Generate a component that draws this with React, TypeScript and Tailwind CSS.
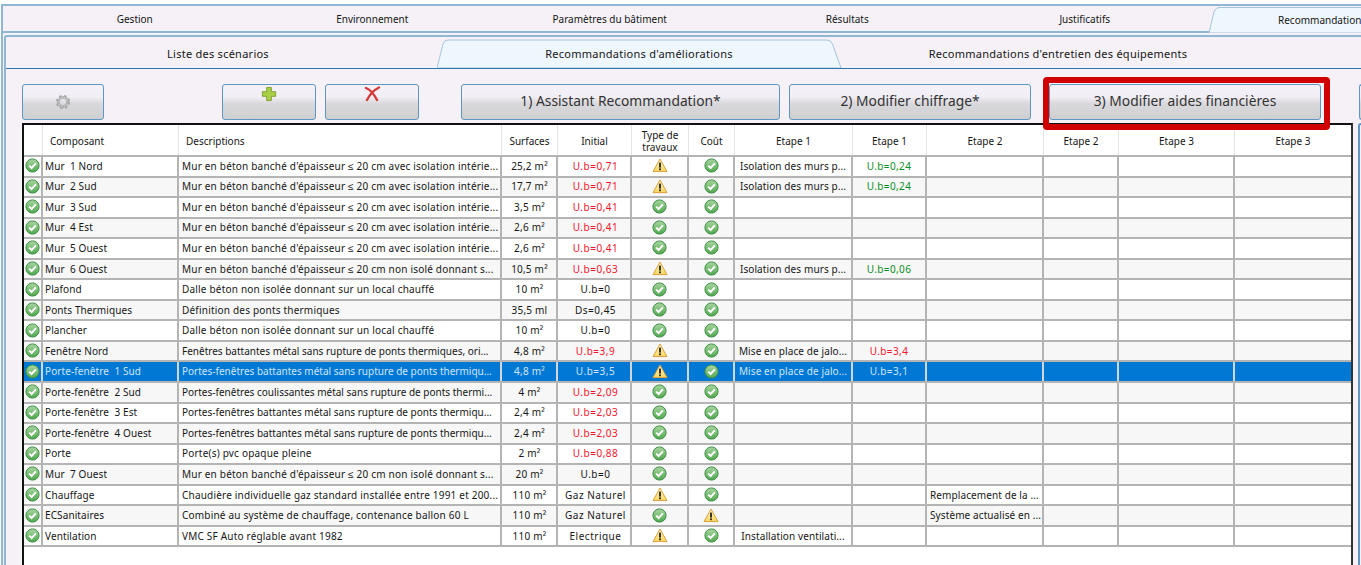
import type { ReactNode } from "react";

const rows: [string, string, string, [string, string], string, string, string, [string, string], string][] = [
  ["Mur  1 Nord", "Mur en béton banché d'épaisseur ≤ 20 cm avec isolation intérie...", "25,2 m²", ["U.b=0,71", "r"], "w", "o", "Isolation des murs p...", ["U.b=0,24", "g"], ""],
  ["Mur  2 Sud", "Mur en béton banché d'épaisseur ≤ 20 cm avec isolation intérie...", "17,7 m²", ["U.b=0,71", "r"], "w", "o", "Isolation des murs p...", ["U.b=0,24", "g"], ""],
  ["Mur  3 Sud", "Mur en béton banché d'épaisseur ≤ 20 cm avec isolation intérie...", "3,5 m²", ["U.b=0,41", "r"], "o", "o", "", ["", ""], ""],
  ["Mur  4 Est", "Mur en béton banché d'épaisseur ≤ 20 cm avec isolation intérie...", "2,6 m²", ["U.b=0,41", "r"], "o", "o", "", ["", ""], ""],
  ["Mur  5 Ouest", "Mur en béton banché d'épaisseur ≤ 20 cm avec isolation intérie...", "2,6 m²", ["U.b=0,41", "r"], "o", "o", "", ["", ""], ""],
  ["Mur  6 Ouest", "Mur en béton banché d'épaisseur ≤ 20 cm non isolé donnant s...", "10,5 m²", ["U.b=0,63", "r"], "w", "o", "Isolation des murs p...", ["U.b=0,06", "g"], ""],
  ["Plafond", "Dalle béton non isolée donnant sur un local chauffé", "10 m²", ["U.b=0", ""], "o", "o", "", ["", ""], ""],
  ["Ponts Thermiques", "Définition des ponts thermiques", "35,5 ml", ["Ds=0,45", ""], "o", "o", "", ["", ""], ""],
  ["Plancher", "Dalle béton non isolée donnant sur un local chauffé", "10 m²", ["U.b=0", ""], "o", "o", "", ["", ""], ""],
  ["Fenêtre Nord", "Fenêtres battantes métal sans rupture de ponts thermiques, ori...", "4,8 m²", ["U.b=3,9", "r"], "w", "o", "Mise en place de jalo...", ["U.b=3,4", "r"], ""],
  ["Porte-fenêtre  1 Sud", "Portes-fenêtres battantes métal sans rupture de ponts thermiqu...", "4,8 m²", ["U.b=3,5", ""], "w", "o", "Mise en place de jalo...", ["U.b=3,1", ""], ""],
  ["Porte-fenêtre  2 Sud", "Portes-fenêtres coulissantes métal sans rupture de ponts thermi...", "4 m²", ["U.b=2,09", "r"], "o", "o", "", ["", ""], ""],
  ["Porte-fenêtre  3 Est", "Portes-fenêtres battantes métal sans rupture de ponts thermiqu...", "2,4 m²", ["U.b=2,03", "r"], "o", "o", "", ["", ""], ""],
  ["Porte-fenêtre  4 Ouest", "Portes-fenêtres battantes métal sans rupture de ponts thermiqu...", "2,4 m²", ["U.b=2,03", "r"], "o", "o", "", ["", ""], ""],
  ["Porte", "Porte(s) pvc opaque pleine", "2 m²", ["U.b=0,88", "r"], "o", "o", "", ["", ""], ""],
  ["Mur  7 Ouest", "Mur en béton banché d'épaisseur ≤ 20 cm non isolé donnant s...", "20 m²", ["U.b=0", ""], "o", "o", "", ["", ""], ""],
  ["Chauffage", "Chaudière individuelle gaz standard installée entre 1991 et 200...", "110 m²", ["Gaz Naturel", ""], "w", "o", "", ["", ""], "Remplacement de la ..."],
  ["ECSanitaires", "Combiné au système de chauffage, contenance ballon 60 L", "110 m²", ["Gaz Naturel", ""], "o", "w", "", ["", ""], "Système actualisé en ..."],
  ["Ventilation", "VMC SF Auto réglable avant 1982", "110 m²", ["Electrique", ""], "w", "o", "Installation ventilati...", ["", ""], ""],
];

function Ok({ id }: { id: string }) {
  return (
    <svg width="15" height="15" viewBox="0 0 15 15" className="block shrink-0">
      <defs>
        <linearGradient id={id} x1="0" y1="0" x2="0" y2="1">
          <stop offset="0" stopColor="#a9d6a0" />
          <stop offset="1" stopColor="#4fa84f" />
        </linearGradient>
      </defs>
      <circle cx="7.5" cy="7.5" r="6.6" fill={`url(#${id})`} stroke="#3f8f45" strokeWidth="1" />
      <path d="M4.2 7.6 L6.6 10 L10.9 5.4" fill="none" stroke="#fff" strokeWidth="2" />
    </svg>
  );
}

function Warn({ id }: { id: string }) {
  return (
    <svg width="16" height="15" viewBox="0 0 16 15" className="block shrink-0">
      <defs>
        <linearGradient id={id} x1="0" y1="0" x2="0" y2="1">
          <stop offset="0" stopColor="#fff6c8" />
          <stop offset="1" stopColor="#fbd75f" />
        </linearGradient>
      </defs>
      <path d="M8 1 L15 13.6 H1 Z" fill={`url(#${id})`} stroke="#dca13c" strokeWidth="1" strokeLinejoin="round" />
      <rect x="7.1" y="4.6" width="1.8" height="5" fill="#222" />
      <rect x="7.1" y="10.4" width="1.8" height="1.8" fill="#222" />
    </svg>
  );
}

const St = ({ k, id }: { k: string; id: string }) => (k === "w" ? <Warn id={id} /> : <Ok id={id} />);

const btn =
  "flex shrink-0 justify-center h-[35.5px] rounded-[3px] border border-[#5f97c4] bg-[linear-gradient(#f4f1f8_0%,#f1eef5_35%,#d9d8dc_55%,#cfcfd1_100%)] text-[13.8px] text-[#333]";

const Cell = ({ c, s, children }: { c: string; s?: boolean; children?: ReactNode }) => (
  <div className={`flex items-center min-w-0 whitespace-pre border-r-2 ${s ? "border-[#cfd6dc]" : "border-[#b4b4b4]"} ${c}`}>{children}</div>
);

export default function App() {
  const cols = "grid grid-cols-[19px_136px_323px_56px_74px_57px_46px_118px_74px_117px_75px_116px_1fr]";
  const topTabs = ["Gestion", "Environnement", "Paramètres du bâtiment", "Résultats", "Justificatifs"];
  return (
    <div className="w-[1361px] h-[565px] overflow-hidden bg-white text-[#161616] font-['Noto_Sans','Open_Sans',sans-serif] text-[10px]">
      <div className="pt-[4px] h-full">
        <div className="h-[561px] ml-[1px] border-l-2 border-[#8fb6d3] border-t-2 bg-[#f5f1f6] flex flex-col">
          <div className="h-[27px] pl-[13px] pt-[1px] flex items-center relative border-b-2 border-[#8fb6d3] shrink-0">
            <svg width="160" height="27" className="absolute left-[1206px] top-0">
              <path d="M0 27 L5 6 Q6.5 1.5 11 1.5 H160 V27 Z" fill="#eef6fe" stroke="#a8c4da" strokeWidth="1" />
            </svg>
            {topTabs.map((t) => (
              <div key={t} className="w-[237.5px] shrink-0 text-center">{t}</div>
            ))}
            <div className="absolute left-[1275px] top-[7px] whitespace-nowrap">Recommandations</div>
          </div>
          <div className="h-[2px] shrink-0"></div>
          <div className="flex-1 ml-[1px] border-l-2 border-t-2 border-[#8fb6d3] flex flex-col min-h-0 rounded-tl-[3px]">
            <div className="h-[32px] pt-[3px] shrink-0 relative flex items-center border-b border-[#2e75ad] text-[11px] tracking-[0.25px]">
              <svg width="412" height="29" className="absolute left-[431px] top-[2px]">
                <path d="M0 29 L6 5 Q7.5 1 11 1 H390 Q394 1 395.5 5 L404 29 Z" fill="#eef6fe" stroke="#a8c4da" strokeWidth="1" />
              </svg>
              <div className="relative w-[431px] shrink-0 text-center pr-[7px]">Liste des scénarios</div>
              <div className="relative w-[404px] shrink-0 text-center">Recommandations d'améliorations</div>
              <div className="relative flex-1 text-center pr-[86px]">Recommandations d'entretien des équipements</div>
            </div>
            <div className="relative flex items-start h-[54px] shrink-0 pt-[15px] pl-[16px]">
              <div className={`${btn} items-center w-[82px]`}>
                <svg width="18" height="18" viewBox="0 0 18 18">
                  <circle cx="9" cy="9" r="4.6" fill="none" stroke="#b2b2b2" strokeWidth="3" strokeDasharray="2.4 0.5" />
                  <circle cx="9" cy="9" r="6.3" fill="none" stroke="#a8a8a8" strokeWidth="1.8" strokeDasharray="2.6 2.4" />
                </svg>
              </div>
              <div className={`${btn} items-start w-[94px] ml-[118px]`}>
                <svg width="16" height="16" viewBox="0 0 17 17" className="mt-[1px]">
                  <path d="M6 1.5 H11 V6 H15.5 V11 H11 V15.5 H6 V11 H1.5 V6 H6 Z" fill="#a8cf45" stroke="#7d9f2e" strokeWidth="1" />
                </svg>
              </div>
              <div className={`${btn} items-start w-[94px] ml-[9px]`}>
                <svg width="17" height="16" viewBox="0 0 17 16" className="mt-[1px]">
                  <path d="M2 2 C7 4 10 8 13 14 M15 1.5 C10 4 6 8 3 14" fill="none" stroke="#d6393a" strokeWidth="2.4" strokeLinecap="round" />
                </svg>
              </div>
              <div className={`${btn} items-center w-[319px] ml-[42px]`}>1) Assistant Recommandation*</div>
              <div className={`${btn} items-center w-[242px] ml-[9px]`}>2) Modifier chiffrage*</div>
              <div className={`${btn} items-center w-[272px] ml-[18px]`}>3) Modifier aides financières</div>
              <div className={`${btn} items-center w-[10px] ml-[38px] !rounded-r-none !border-r-0`}></div>
              <div className="absolute left-[1037px] top-[8px] w-[287px] h-[53px] border-[6px] border-[#d00000] rounded-[4px] z-10 pointer-events-none"></div>
            </div>
            <div className="flex flex-1 min-h-0">
              <div className="ml-[16px] w-[1331px] shrink-0 bg-white border-2 border-b-0 border-[#111] border-r-[#333]">
                <div className={`${cols} h-[32px] border-b-2 border-[#b4b4b4]`}>
                  {["", "Composant", "Descriptions", "Surfaces", "Initial", "Type de\ntravaux", "Coût", "Etape 1", "Etape 1", "Etape 2", "Etape 2", "Etape 3", "Etape 3"].map((h, i) => (
                    <div
                      key={i}
                      className={`flex items-center pt-[1px] border-r border-[#e4e4e4] whitespace-pre-line leading-[12px] text-center ${i === 1 || i === 2 ? "pl-[7px]" : "justify-center"} ${i === 12 ? "border-r-0" : ""}`}
                    >
                      {h}
                    </div>
                  ))}
                </div>
                {rows.map((r, i) => {
                  const sel = i === 10;
                  const bg = sel ? "bg-[#0078d4] text-[#cfe6f8]" : i % 2 ? "bg-[#f7f7f7]" : "bg-white";
                  const col = (k: string) => (sel ? "" : k === "r" ? "text-[#f5142c]" : k === "g" ? "text-[#0a8f26]" : "");
                  const long = r[1].startsWith("Portes") || r[1].startsWith("Fenêtres");
                  return (
                    <div key={i} className={`${cols} h-[20.55px] border-b-2 border-[#b4b4b4] ${bg}`}>
                      <Cell c="justify-center pb-[1px]" s={sel}><Ok id={`a${i}`} /></Cell>
                      <Cell c="pl-[2px] tracking-[0.1px]" s={sel}>{r[0]}</Cell>
                      <Cell c={`pl-[3px] ${long ? "" : "tracking-[0.2px]"}`} s={sel}>{r[1]}</Cell>
                      <Cell c="justify-center pl-[1px] tracking-[0.2px]" s={sel}>{r[2]}</Cell>
                      <Cell c={`justify-center pl-[3px] tracking-[0.5px] ${col(r[3][1])}`} s={sel}>{r[3][0]}</Cell>
                      <Cell c="justify-center pb-[1px]" s={sel}><St k={r[4]} id={`b${i}`} /></Cell>
                      <Cell c="justify-center pb-[1px]" s={sel}><St k={r[5]} id={`c${i}`} /></Cell>
                      <Cell c="justify-center tracking-[0.1px]" s={sel}>{r[6]}</Cell>
                      <Cell c={`justify-center tracking-[0.4px] ${col(r[7][1])}`} s={sel}>{r[7][0]}</Cell>
                      <Cell c="pl-[3px] tracking-[0.1px]" s={sel}>{r[8]}</Cell>
                      <Cell c="" s={sel} />
                      <Cell c="" s={sel} />
                      <div />
                    </div>
                  );
                })}
              </div>
              <div className="ml-[5px] flex-1 border-l-2 border-t-2 border-[#5f97c4] rounded-tl-[3px]"></div>
            </div>
          </div>
        </div>
      </div>
    </div>
  );
}
